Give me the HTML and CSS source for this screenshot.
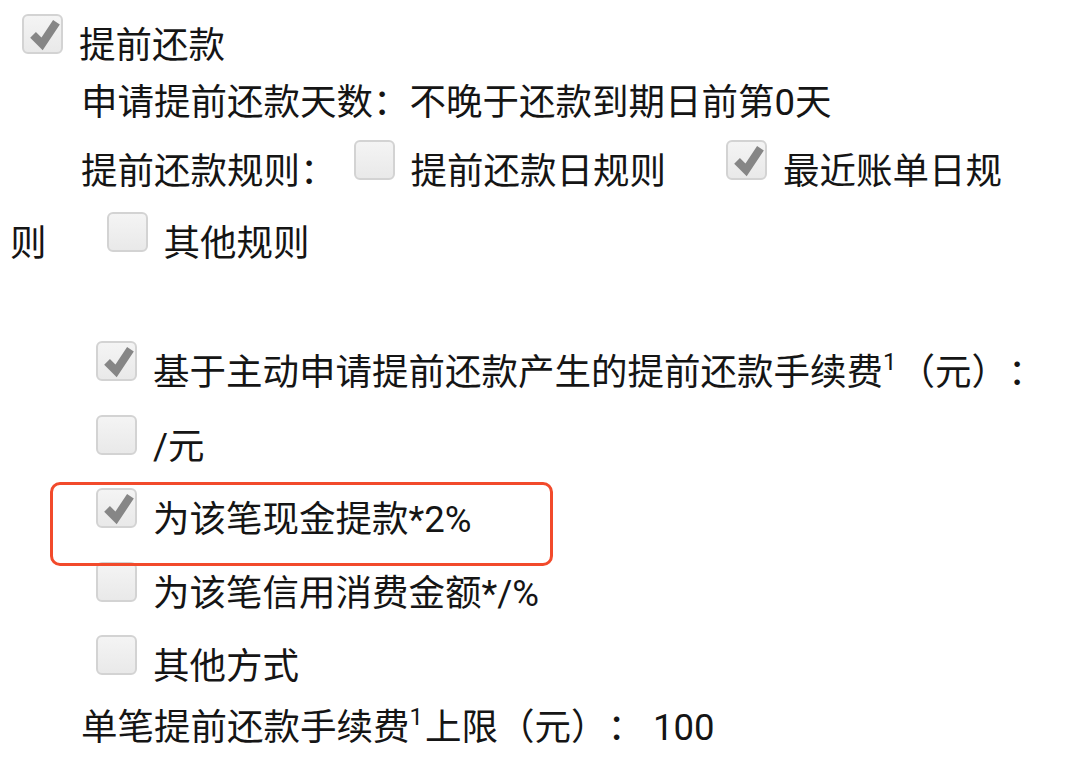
FILE: index.html
```html
<!DOCTYPE html>
<html lang="zh-CN">
<head>
    <meta charset="UTF-8">
    <meta name="viewport" content="width=device-width, initial-scale=1.0">
    <title>提前还款</title>
    <link rel="stylesheet" href="styles.css">
</head>
<body>
    <div class="page">
        <div class="terms">
            <div class="head">
                <span class="box on"><svg viewBox="0 0 41 40"><polyline points="10,21 20,31 36,7"/></svg></span>提前还款
            </div>
            <div class="line">申请提前还款天数：不晚于还款到期日前第0天</div>
            <p class="rules">提前还款规则：<span class="box first"></span>提前还款日规则<span class="box gap on"><svg viewBox="0 0 41 40"><polyline points="10,21 20,31 36,7"/></svg></span>最近账单日规则<span class="box gap"></span>其他规则</p>
        </div>

        <div class="fees">
            <div class="opt"><span class="box on"><svg viewBox="0 0 41 40"><polyline points="10,21 20,31 36,7"/></svg></span>基于主动申请提前还款产生的提前还款手续费<sup>1</sup>（元）：</div>
            <div class="opt"><span class="box"></span>/元</div>
            <div class="opt"><span class="box on"><svg viewBox="0 0 41 40"><polyline points="10,21 20,31 36,7"/></svg></span>为该笔现金提款*2%</div>
            <div class="opt"><span class="box"></span>为该笔信用消费金额*/%</div>
            <div class="opt"><span class="box"></span>其他方式</div>
        </div>

        <div class="line cap">单笔提前还款手续费<sup>1</sup>上限（元）： 100</div>

        <!-- 标注框 -->
        <div class="mark"></div>
    </div>
</body>
</html>
```

FILE: styles.css
```css
body {
    margin: 0;
    background: #fff;
    color: #151515;
    font-family: Roboto, "Noto Sans CJK SC", sans-serif;
    font-size: 36.5px;
    text-spacing-trim: space-all;
}
.page {
    position: relative;
    padding-left: 10px;
    height: 775px;
    overflow: hidden;
}
.terms {
    max-width: 1020px;
}
.head {
    margin-top: 14px;
    line-height: 58px;
}
.head .box {
    margin-left: 12px;
}
.line {
    padding-left: 71px;
    line-height: 56px;
}
.rules {
    margin: 5px 0 0;
    text-indent: 71px;
    line-height: 72px;
}
.rules .first {
    margin-left: 17px;
}
.rules .gap {
    margin-left: 60px;
}
.fees {
    margin-top: 56px;
    padding-left: 86px;
}
.opt {
    line-height: 73.5px;
    white-space: nowrap;
}
.cap {
    line-height: 48px;
}
sup {
    font-size: 24px;
    line-height: 0;
    vertical-align: 15px;
    margin-right: 2px;
}

/* checkbox */
.box {
    display: inline-block;
    box-sizing: border-box;
    width: 41px;
    height: 40px;
    margin: 0 16px 4px 0;
    border: 2px solid #d3d3d3;
    border-radius: 6px;
    background: linear-gradient(#f4f4f4, #e9e9e9);
    vertical-align: baseline;
    text-indent: 0;
}
.box svg {
    display: block;
    width: 37px;
    height: 36px;
}
.box polyline {
    fill: none;
    stroke: #868686;
    stroke-width: 9;
}

.mark {
    position: absolute;
    left: 50px;
    top: 482px;
    width: 503px;
    height: 84px;
    box-sizing: border-box;
    border: 3.5px solid #f24a2b;
    border-radius: 10px;
}
```
